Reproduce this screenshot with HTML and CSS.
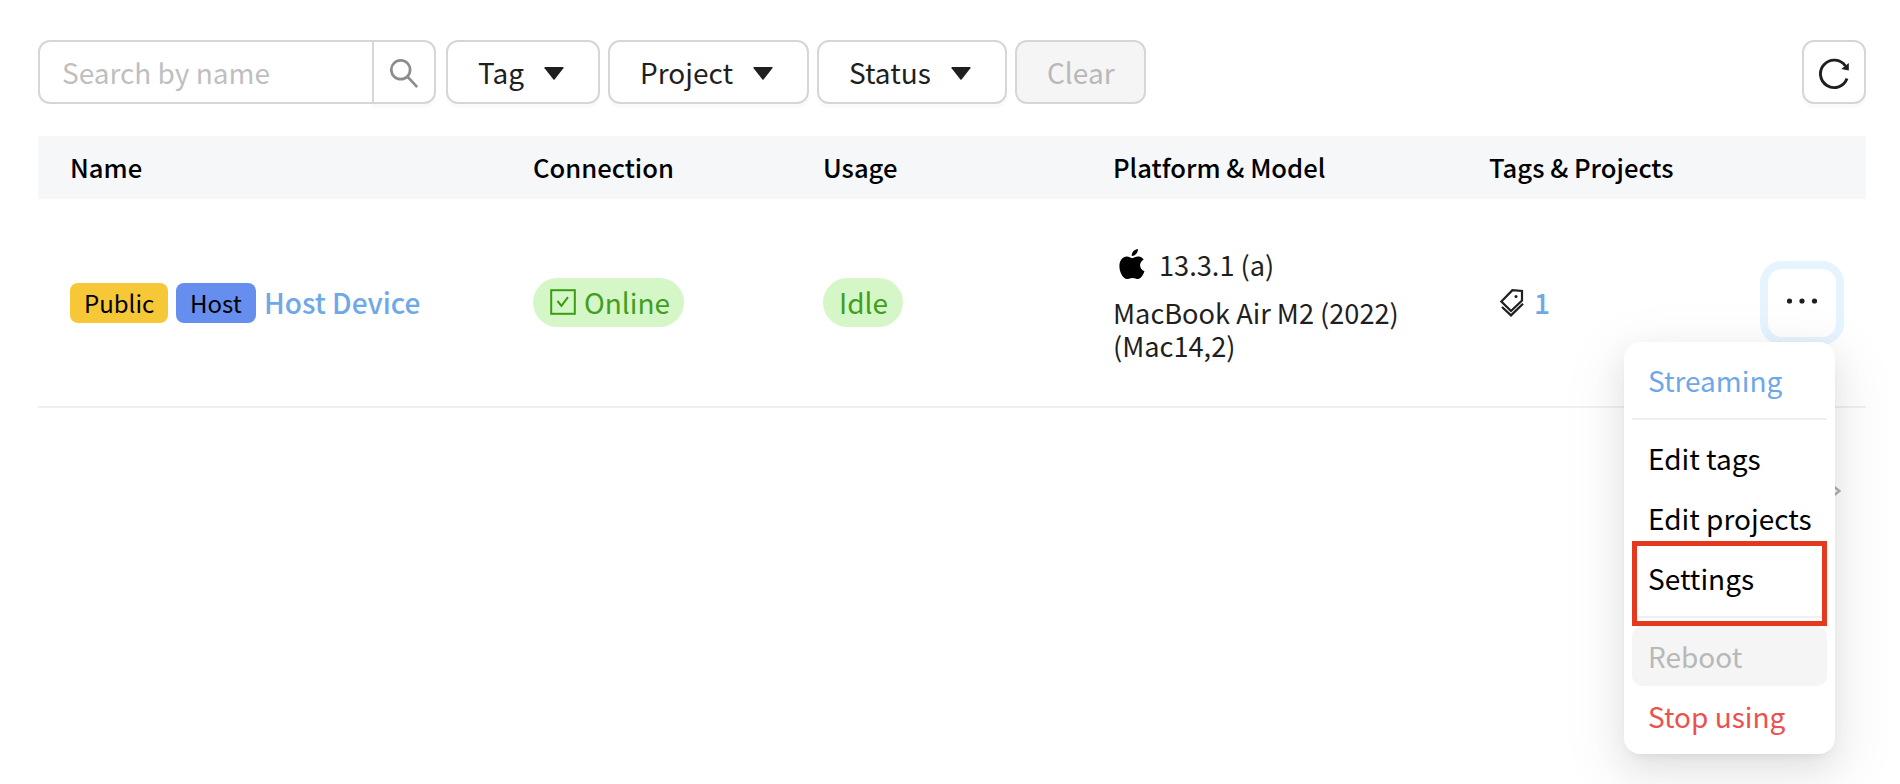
FILE: index.html
```
<!DOCTYPE html>
<html lang="en">
<head>
<meta charset="utf-8">
<title>Devices</title>
<link rel="stylesheet" href="styles.css">
</head>
<body>
<main class="page">
  <div class="toolbar">
    <div class="search">
      <span class="search-input">Search by name</span>
      <span class="search-button">
        <svg width="28" height="29" viewBox="0 0 28 29" fill="none" stroke="#8c8c8c" stroke-width="2.700"><circle cx="10.700" cy="10.800" r="9.400"/><path d="M17.400 17.600 27.200 28"/></svg>
      </span>
    </div>
    <div class="button tag">Tag<svg width="20" height="13" viewBox="0 0 20 13"><path d="M1 0H19Q20 .4 19.400 1.300L10.600 12.400Q10 13 9.400 12.400L.6 1.300Q0 .4 1 0Z" fill="#1f1f1f"/></svg></div>
    <div class="button project">Project<svg width="20" height="13" viewBox="0 0 20 13"><path d="M1 0H19Q20 .4 19.400 1.300L10.600 12.400Q10 13 9.400 12.400L.6 1.300Q0 .4 1 0Z" fill="#1f1f1f"/></svg></div>
    <div class="button status">Status<svg width="20" height="13" viewBox="0 0 20 13"><path d="M1 0H19Q20 .4 19.400 1.300L10.600 12.400Q10 13 9.400 12.400L.6 1.300Q0 .4 1 0Z" fill="#1f1f1f"/></svg></div>
    <div class="button clear">Clear</div>
    <div class="button refresh">
      <svg width="32" height="32" viewBox="0 0 32 32"><path d="M29 20.600A13.700 13.700 0 1 1 27.400 8" fill="none" stroke="#1f1f1f" stroke-width="2.900"/><path d="M30.800 5V12.600L23.300 11Z" fill="#1f1f1f"/></svg>
    </div>
  </div>
  <div class="table">
    <div class="row head">
      <div>Name</div><div>Connection</div><div>Usage</div><div>Platform &amp; Model</div><div>Tags &amp; Projects</div><div></div>
    </div>
    <div class="row body">
      <div class="name"><span class="badge public">Public</span><span class="badge host">Host</span><a class="link">Host Device</a></div>
      <div><span class="pill online"><svg class="check" width="26" height="26" viewBox="0 0 26 26" fill="none" stroke="#389e0d" stroke-width="2"><rect x="1.200" y="1.200" width="23.600" height="23.600"/><path d="M7.500 12 11.400 16.800 18 8.200"/></svg>Online</span></div>
      <div><span class="pill idle">Idle</span></div>
      <div class="platform">
        <div class="os"><svg width="26" height="31" viewBox="0 0 26 31"><path d="M13 9.200C15 8.600 17 7.200 19.500 7.400C22 7.600 23.600 8.800 24.700 10.400C19.500 13.500 20 20 25.500 22.300C24.300 25.800 21.600 30 19 30C17 30 16 28.900 13.500 28.900C11 28.900 10 30 8 30C4 30 .4 23 .4 17.300C.4 11 4 7.500 7.700 7.500C10 7.500 11.700 8.900 13 9.200ZM12.800 6.900C12.500 3.300 15.500 .5 18.900 0C19.200 3.700 16.200 7 12.800 6.900Z"/></svg>13.3.1 (a)</div>
        <div class="model">MacBook Air M2 (2022)<br>(Mac14,2)</div>
      </div>
      <div class="tags">
        <svg width="24" height="28" viewBox="0 0 24 28" fill="none" stroke="#1f1f1f" stroke-width="2.200"><path d="M1.400 12.500 12.400 1.200 22 2V11.500L11 22Z"/><path d="M2 18 11 26.400 23 14.700"/><circle cx="16" cy="7.500" r="1.500" fill="#1f1f1f" stroke="none"/></svg><a class="link">1</a>
      </div>
      <div class="actions">
        <div class="more"><svg width="32" height="6" viewBox="0 0 32 6" fill="#1f1f1f"><circle cx="3.500" cy="3" r="2.600"/><circle cx="16" cy="3" r="2.600"/><circle cx="28.500" cy="3" r="2.600"/></svg></div>
      </div>
    </div>
  </div>
  <div class="pager"><svg width="9" height="12" viewBox="0 0 9 12" fill="none" stroke="#b0b0b0" stroke-width="2.400"><path d="M1 1 7.500 6 1 11"/></svg></div>
</main>
<div class="menu">
  <div class="item streaming">Streaming</div>
  <div class="divider"></div>
  <div class="item">Edit tags</div>
  <div class="item">Edit projects</div>
  <div class="item">Settings</div>
  <div class="divider"></div>
  <div class="item disabled">Reboot</div>
  <div class="item danger">Stop using</div>
  <div class="highlight"></div>
</div>
</body>
</html>
```
FILE: styles.css
```
* { box-sizing: border-box; }
body {
  margin: 0;
  height: 784px;
  overflow: hidden;
  background: #fff;
  color: #1f1f1f;
  font: 28px/44px "Noto Sans CJK JP", "Noto Sans", sans-serif;
  white-space: nowrap;
}
svg { display: block; flex: none; }
.page { padding: 40px 34px 0 38px; }
.toolbar { display: flex; height: 64px; }
.search { display: flex; width: 398px; margin-right: 10px; }
.search-input {
  width: 334px;
  padding: 8px 22px;
  border: 2px solid #d6d6d6;
  border-right: 0;
  border-radius: 12px 0 0 12px;
  color: #bfbfbf;
}
.search-button {
  display: flex;
  align-items: center;
  justify-content: center;
  width: 64px;
  padding-top: 3px;
  border: 2px solid #d6d6d6;
  border-radius: 0 12px 12px 0;
  box-shadow: 0 4px 0 rgba(0, 0, 0, .02);
}
.button {
  display: flex;
  align-items: center;
  height: 64px;
  padding: 0 30px;
  border: 2px solid #d6d6d6;
  border-radius: 12px;
  box-shadow: 0 4px 0 rgba(0, 0, 0, .02);
}
.button svg { margin: 3px 0 0 20px; }
.tag { width: 154px; margin-right: 8px; }
.project { width: 201px; margin-right: 8px; }
.status { width: 190px; margin-right: 8px; }
.clear { width: 131px; background: #f5f5f5; color: #b8b8b8; box-shadow: none; }
.refresh { width: 64px; margin-left: auto; padding: 0; justify-content: center; }
.refresh svg { margin: 4px 0 0; }
.table { margin-top: 32px; }
.row {
  display: grid;
  grid-template-columns: 463px 290px 290px 376px 290px 1fr;
  align-items: center;
  padding-left: 32px;
}
.head {
  height: 63px;
  padding-bottom: 2px;
  background: #f5f7f9;
  color: #000;
  font-size: 25.6px;
  font-weight: 500;
}
.body { height: 209px; border-bottom: 2px solid #f0f0f0; }
.name { display: flex; align-items: center; }
.badge {
  height: 40px;
  margin-right: 8px;
  padding: 0 14px;
  border-radius: 8px;
  color: #000;
  font-size: 24px;
  line-height: 40px;
}
.public { width: 98px; background: #f6c737; }
.host { width: 80px; background: #668eee; }
.link { color: #6fa8e8; font-weight: 500; }
.pill {
  display: inline-flex;
  align-items: center;
  height: 49px;
  padding: 0 0 1px 17px;
  border-radius: 25px;
  background: #d5f7c8;
  color: #419e20;
}
.online { width: 151px; }
.idle { width: 80px; padding-left: 16px; }
.check { margin-right: 8px; }
.platform { padding-bottom: 2px; font-size: 27.2px; }
.os { display: flex; align-items: center; height: 44px; padding-left: 6px; }
.os svg { margin: 2px 14px 0 0; }
.model { margin-top: 10px; line-height: 33px; }
.tags { display: flex; align-items: center; padding-left: 11px; }
.tags .link { margin-left: 10px; }
.name .link, .tags .link { padding-bottom: 1px; }
.more {
  display: flex;
  align-items: center;
  justify-content: center;
  width: 68px;
  height: 68px;
  margin-left: -11px;
  padding-bottom: 3px;
  border-radius: 14px;
  box-shadow: 0 0 0 8px #e6f4ff;
}
.pager { display: flex; justify-content: flex-end; margin: 77px 25px 0 0; }
.menu {
  position: absolute;
  left: 1624px;
  top: 342px;
  width: 211px;
  height: 412px;
  padding: 8px;
  border-radius: 16px;
  background: #fff;
  box-shadow: 0 12px 32px rgba(0, 0, 0, .08), 0 6px 12px -8px rgba(0, 0, 0, .12), 0 18px 56px 16px rgba(0, 0, 0, .05);
  color: #000;
}
.item { height: 60px; padding: 8px 16px; border-radius: 10px; }
.divider { height: 2px; margin: 8px 0; background: #f0f0f0; }
.streaming { color: #6fa8e8; }
.disabled { background: #f5f5f5; color: #b8b8b8; }
.danger { color: #ea524f; }
.highlight {
  position: absolute;
  left: 7.500px;
  top: 198.500px;
  width: 195px;
  height: 85px;
  border: 5px solid #e5391f;
}
```
